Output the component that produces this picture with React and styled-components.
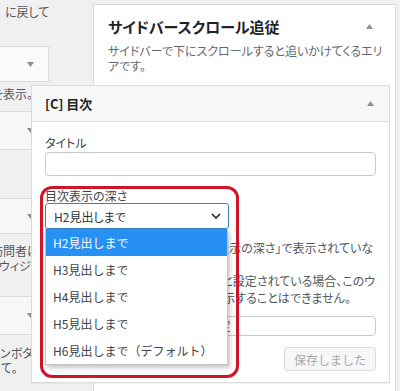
import React from 'react';
import styled, { createGlobalStyle } from 'styled-components';

const GlobalStyle = createGlobalStyle`
    body {
        margin: 0;
        background: #f0f0f1;
        font-family: "Noto Sans CJK JP", "Noto Sans", sans-serif;
        font-feature-settings: "palt";
        color: #3c434a;
        overflow: hidden;
    }
`

const Page = styled.div`
    display: flex;
    align-items: flex-start;
    height: 391px;
    overflow: hidden;
`

const LeftColumn = styled.div`
    width: 49px;
    flex-shrink: 0;
    display: flex;
    flex-direction: column;
    overflow: hidden;
`

const Desc = styled.div`
    margin-top: ${p => p.$top || 0}px;
    margin-left: ${p => p.$shift || 0}px;
    font-size: 12px;
    line-height: 15px;
    color: #50575e;
    white-space: nowrap;
`

const WidgetTop = styled.div`
    margin-top: ${p => p.$top}px;
    height: ${p => p.$h}px;
    box-sizing: border-box;
    background: ${p => p.$light ? '#fbfbfb' : '#f6f7f7'};
    border: 1px solid #dcdcde;
    border-left: none;
    display: flex;
    align-items: center;
    justify-content: flex-end;
    padding-right: 14px;
`

const Sidebar = styled.section`
    margin: 4px 0 0 44px;
    width: 303px;
    min-height: 400px;
    box-sizing: border-box;
    flex-shrink: 0;
    background: #fff;
    border: 1px solid #dcdcde;
    padding: 10px 22px 0 14px;
`

const SidebarHead = styled.div`
    display: flex;
    align-items: center;
    justify-content: space-between;
    height: 22px;
`

const SidebarTitle = styled.h2`
    margin: 0;
    font-size: 15px;
    font-weight: bold;
    color: #1d2327;
`

const SidebarDesc = styled.div`
    margin-top: 6px;
    font-size: 12px;
    line-height: 15px;
    color: #646970;

    & span {
        display: block;
        white-space: nowrap;
    }
`

const WidgetBox = styled.div`
    position: relative;
    z-index: 1;
    margin: 12px 0 0 -77px;
    width: 359px;
    box-sizing: border-box;
    background: #fff;
    border: 1px solid #dcdcde;
    box-shadow: 0 1px 1px rgba(0, 0, 0, .04);
`

const WidgetHeader = styled.div`
    height: 35px;
    display: flex;
    align-items: center;
    justify-content: space-between;
    padding: 0 15px 0 13px;
    background: #f6f7f7;
    border-bottom: 1px solid #dcdcde;
`

const WidgetTitle = styled.h3`
    margin: 0;
    font-size: 13px;
    font-weight: bold;
    color: #1d2327;
`

const WidgetBody = styled.div`
    position: relative;
    display: flex;
    flex-direction: column;
    padding: 13px 13px 11px;
`

const FieldLabel = styled.label`
    margin-top: ${p => p.$top || 0}px;
    font-size: 12px;
    line-height: ${p => p.$lh || 16}px;
    color: #3c434a;
`

const TextField = styled.div`
    margin-top: ${p => p.$top || 0}px;
    height: ${p => p.$h}px;
    box-sizing: border-box;
    border: 1px solid #c9c9c9;
    border-radius: 4px;
    padding: 0 8px;
    font-size: 12px;
    line-height: ${p => p.$h - 2}px;
    color: #50575e;
    white-space: nowrap;
    overflow: hidden;
`

const SelectWrap = styled.div`
    position: relative;
    width: 184px;
`

const Select = styled.div`
    height: 26px;
    box-sizing: border-box;
    display: flex;
    align-items: center;
    justify-content: space-between;
    padding: 0 7px 0 8px;
    border: 1px solid #3582c4;
    border-radius: 3px;
    font-size: 12px;
    color: #2c3338;
`

const DropList = styled.ul`
    position: absolute;
    z-index: 2;
    top: 100%;
    left: 0;
    width: 183px;
    margin: 0;
    padding: 0;
    list-style: none;
    background: #fff;
    border: 1px solid #c3c4c7;
    border-top: none;
    box-sizing: border-box;
    box-shadow: 2px 3px 4px rgba(0, 0, 0, .22);
`

const Option = styled.li`
    height: 27px;
    display: flex;
    align-items: center;
    padding-left: 7px;
    font-size: 12px;
    font-feature-settings: normal;
    background: ${p => p.$active ? '#2790f5' : '#fff'};
    color: ${p => p.$active ? '#fff' : '#3c434a'};
`

const HelpText = styled.div`
    margin-top: 11px;
    font-size: 12px;
    line-height: 16.5px;
    color: #50575e;

    & span {
        display: block;
        white-space: nowrap;
    }
`

const SaveButton = styled.button`
    align-self: flex-end;
    margin-top: 11px;
    height: 24px;
    padding: 0 9px;
    font-family: inherit;
    font-size: 12px;
    color: #a7aaad;
    background: #f6f7f7;
    border: 1px solid #dcdcde;
    border-radius: 3px;
`

const Highlight = styled.div`
    position: absolute;
    z-index: 3;
    top: 64px;
    left: 8px;
    width: 199px;
    height: 192px;
    box-sizing: border-box;
    border: 3px solid #d2142b;
    border-radius: 12px;
    pointer-events: none;
`

function Arrow({ up }) {
    return (
        <svg width="7" height="5" viewBox="0 0 7 5">
            <polygon points={up ? '0,5 3.5,0 7,5' : '0,0 7,0 3.5,5'} fill="#8c8f94" />
        </svg>
    )
}

function Chevron() {
    return (
        <svg width="10" height="6" viewBox="0 0 10 6">
            <polyline points="1,1 5,5 9,1" fill="none" stroke="#1d2327" strokeWidth="1.6" />
        </svg>
    )
}

const levels = ['H2見出しまで', 'H3見出しまで', 'H4見出しまで', 'H5見出しまで', 'H6見出しまで（デフォルト）']

export default function App() {
    return (
        <Page>
            <GlobalStyle />
            <LeftColumn>
                <Desc $top={4} $shift={5}>に戻して</Desc>
                <WidgetTop $top={27} $h={36} $light><Arrow /></WidgetTop>
                <Desc $top={4} $shift={-8}>を表示。</Desc>
                <WidgetTop $top={10} $h={39}><Arrow /></WidgetTop>
                <WidgetTop $top={48} $h={36}><Arrow /></WidgetTop>
                <Desc $top={9} $shift={-9}>訪問者に</Desc>
                <Desc $shift={-1}>ウィジェ</Desc>
                <WidgetTop $top={23} $h={39}><Arrow /></WidgetTop>
                <Desc $top={10}>ンボタ</Desc>
                <Desc $shift={1}>て。</Desc>
            </LeftColumn>

            <Sidebar>
                <SidebarHead>
                    <SidebarTitle>サイドバースクロール追従</SidebarTitle>
                    <Arrow up />
                </SidebarHead>
                <SidebarDesc>
                    <span>サイドバーで下にスクロールすると追いかけてくるエリ</span>
                    <span>アです。</span>
                </SidebarDesc>

                <WidgetBox>
                    <WidgetHeader>
                        <WidgetTitle>[C] 目次</WidgetTitle>
                        <Arrow up />
                    </WidgetHeader>
                    <WidgetBody>
                        <FieldLabel>タイトル</FieldLabel>
                        <TextField $top={1} $h={24} />
                        <FieldLabel $top={13} $lh={14}>目次表示の深さ</FieldLabel>
                        <SelectWrap>
                            <Select>
                                H2見出しまで
                                <Chevron />
                            </Select>
                            <DropList>
                                {levels.map((l, i) => (
                                    <Option key={l} $active={i === 0}>{l}</Option>
                                ))}
                            </DropList>
                        </SelectWrap>
                        <HelpText>
                            <span>※この設定は、見出しのうち「目次表示の深さ」で表示されていな</span>
                            <span>い見出しは省かれます。</span>
                            <span>各投稿ページでの目次を「非表示」と設定されている場合、このウ</span>
                            <span>ィジェットの目次を本文と同様に表示することはできません。</span>
                        </HelpText>
                        <TextField $top={10} $h={20}>ウィジェットを表示するページ設定</TextField>
                        <SaveButton disabled>保存しました</SaveButton>
                        <Highlight />
                    </WidgetBody>
                </WidgetBox>
            </Sidebar>
        </Page>
    )
}
